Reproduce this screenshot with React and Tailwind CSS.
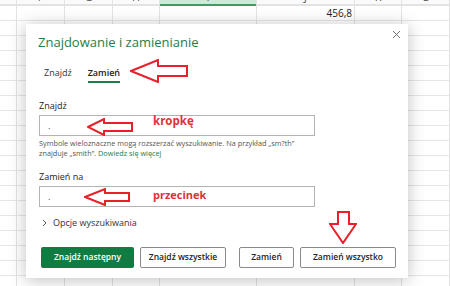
import React from "react";

const font = { fontFamily: '"Open Sans", "Noto Sans", sans-serif' };

function Grid() {
  const cols = [
    { w: 17, l: "" },
    { w: 48, l: "F" },
    { w: 48, l: "G" },
    { w: 47, l: "H" },
    { w: 97, l: "I", sel: true },
    { w: 98, l: "J" },
    { w: 47, l: "K" },
    { w: 48, l: "L" },
  ];
  const rows = Array.from({ length: 18 });
  return (
    <div className="flex h-[286px] w-[450px] overflow-hidden bg-white">
      {cols.map((c, i) => (
        <div key={i} className="flex shrink-0 flex-col border-r border-[#e3e3e3]" style={{ width: c.w }}>
          <div
            className={
              "relative flex h-[6px] items-end justify-center overflow-hidden border-b-2 " +
              (c.sel ? "border-[#3e9c63] bg-[#cfe8d8]" : "border-[#e3e3e3] bg-[#fafafa]")
            }
          >
            <span className="absolute top-[-9px] text-[11px] leading-[12px] text-[#555]">{c.l}</span>
          </div>
          {rows.map((_, r) => (
            <div key={r} className="flex h-[15px] shrink-0 items-center justify-end border-b border-[#e6e6e6] pr-[2px] text-[10px] text-[#222]">
              {r === 0 && c.l === "J" ? "456,8" : ""}
            </div>
          ))}
        </div>
      ))}
    </div>
  );
}

function LeftArrow({ className, w, h, head, shaft }) {
  const my = h / 2;
  const pts = [
    [1, my],
    [head, 1],
    [head, my - shaft / 2],
    [w - 1, my - shaft / 2],
    [w - 1, my + shaft / 2],
    [head, my + shaft / 2],
    [head, h - 1],
  ]
    .map((p) => p.join(","))
    .join(" ");
  return (
    <svg className={className} width={w} height={h} viewBox={`0 0 ${w} ${h}`}>
      <polygon points={pts} fill="none" stroke="#e8202a" strokeWidth="2" strokeLinejoin="miter" />
    </svg>
  );
}

function Button({ children, primary, w }) {
  return (
    <button
      className={
        "flex h-[21px] items-center justify-center rounded-[2px] text-[8.5px] font-semibold " +
        (primary ? "bg-[#107c41] text-white" : "border border-[#8a8a8a] bg-white text-[#242424]")
      }
      style={{ width: w }}
    >
      {children}
    </button>
  );
}

export default function App() {
  return (
    <div className="relative h-[286px] w-[450px] overflow-hidden" style={font}>
      <Grid />

      <div className="absolute left-[26px] top-[24px] flex h-[254px] w-[382px] flex-col bg-white pl-[12px] shadow-[0_2px_16px_rgba(0,0,0,0.25)]">
        <svg className="absolute right-[7px] top-[6px]" width="9" height="9" viewBox="0 0 9 9">
          <path d="M1 1L8 8M8 1L1 8" stroke="#666" strokeWidth="0.9" />
        </svg>

        <div className="mt-[8px] h-[20px] text-[13px] leading-[20px] text-[#1e7e4a]">Znajdowanie i zamienianie</div>

        <div className="mt-[11px] flex h-[20px] gap-[16px] pl-[6px] text-[9px] text-[#333]">
          <div className="flex h-full items-center">Znajdź</div>
          <div className="relative flex h-full items-center font-semibold text-[#222]">
            Zamień
            <div className="absolute bottom-[0px] left-0 right-0 h-[2px] bg-[#1e7e4a]" />
          </div>
        </div>

        <div className="mt-[17px] h-[12px] pl-[1px] text-[9px] leading-[12px] text-[#222]">Znajdź</div>
        <div className="mt-[3px] ml-[1px] flex h-[21px] w-[276px] items-center border border-[#b3b3b3] pl-[8px] text-[9px] text-[#444]">.</div>
        <div className="mt-[2px] w-[280px] pl-[1px] text-[7.3px] leading-[10px] text-[#555]">
          Symbole wieloznaczne mogą rozszerzać wyszukiwanie. Na przykład „sm?th”
          <br />
          znajduje „smith”. <span className="text-[#1e7e4a]">Dowiedz się więcej</span>
        </div>

        <div className="mt-[13px] h-[12px] pl-[1px] text-[9px] leading-[12px] text-[#222]">Zamień na</div>
        <div className="mt-[3px] ml-[1px] flex h-[21px] w-[276px] items-center border border-[#b3b3b3] pl-[8px] text-[9px] text-[#444]">.</div>

        <div className="mt-[9px] flex h-[14px] items-center gap-[6px] pl-[4px] text-[9px] text-[#333]">
          <svg width="5" height="8" viewBox="0 0 5 8">
            <path d="M1 1L4 4L1 7" fill="none" stroke="#444" strokeWidth="0.9" />
          </svg>
          Opcje wyszukiwania
        </div>

        <div className="mt-[17px] flex pl-[3px]">
          <Button primary w={93}>Znajdź następny</Button>
          <div className="w-[6px]" />
          <Button w={86}>Znajdź wszystkie</Button>
          <div className="w-[13px]" />
          <Button w={55}>Zamień</Button>
          <div className="w-[6px]" />
          <Button w={96}>Zamień wszystko</Button>
        </div>
      </div>

      <LeftArrow className="absolute left-[130px] top-[59px]" w={58} h={24} head={28} shaft={10} />
      <LeftArrow className="absolute left-[87px] top-[118px]" w={46} h={18} head={17} shaft={8} />
      <LeftArrow className="absolute left-[84px] top-[188px]" w={46} h={18} head={21} shaft={8} />
      <svg className="absolute left-[329px] top-[211px]" width="28" height="33" viewBox="0 0 28 33">
        <polygon points="9,1 20,1 20,13 27,13 14,32 1,13 9,13" fill="none" stroke="#e8202a" strokeWidth="2" />
      </svg>
      <div className="absolute left-[153px] top-[113px] text-[11.5px] font-bold leading-[16px] text-[#e0303a]">kropkę</div>
      <div className="absolute left-[153px] top-[187px] text-[11px] font-bold leading-[16px] text-[#e0303a]">przecinek</div>
    </div>
  );
}
